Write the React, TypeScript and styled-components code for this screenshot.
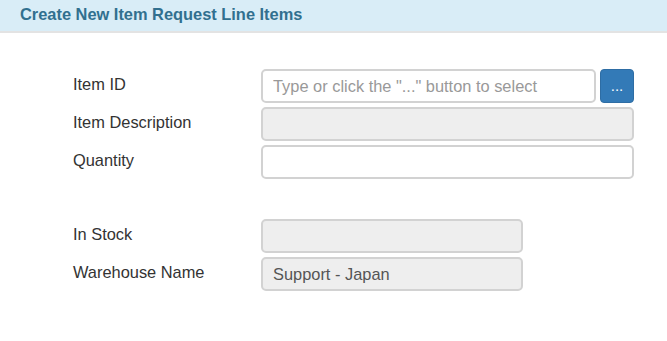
import * as React from "react";
import styled, { createGlobalStyle } from "styled-components";

const GlobalStyle = createGlobalStyle`
  html, body {
    margin: 0;
    padding: 0;
    background: #ffffff;
    font-family: "Liberation Sans", Arial, sans-serif;
  }
`;

const Page = styled.div`
  width: 667px;
  height: 341px;
  background: #ffffff;
`;

const Header = styled.div`
  height: 31px;
  background-color: #d9edf7;
  border-bottom: 2px solid #e3e3e3;
  display: flex;
  align-items: center;
  padding-left: 20px;
`;

const Title = styled.h3`
  margin: 0;
  font-size: 16.4px;
  font-weight: bold;
  color: #31708f;
  margin-top: -2px;
`;

const Form = styled.div`
  padding: 36px 33px 0 73px;
`;

const Group = styled.div<{ $spaceAfter?: number }>`
  display: flex;
  flex-direction: column;
  gap: 4px;
  margin-bottom: ${(p) => p.$spaceAfter ?? 0}px;
`;

const Row = styled.div`
  display: grid;
  grid-template-columns: 188px 1fr;
  align-items: center;
`;

const Label = styled.label`
  font-size: 16.4px;
  color: #333333;
  padding-bottom: 3px;
`;

const Field = styled.div<{ $width?: number }>`
  display: flex;
  gap: 4px;
  width: ${(p) => (p.$width ? `${p.$width}px` : "auto")};
`;

const Input = styled.input<{ $readOnly?: boolean }>`
  flex: 1;
  min-width: 0;
  height: 34px;
  box-sizing: border-box;
  border: 2px solid #d2d2d2;
  border-radius: 5px;
  padding: 0 10px;
  font-family: "Liberation Sans", Arial, sans-serif;
  font-size: 16.4px;
  color: #555555;
  background-color: ${(p) => (p.$readOnly ? "#eeeeee" : "#ffffff")};
  outline: none;
  &::placeholder {
    color: #999999;
  }
`;

const PickButton = styled.button`
  width: 34px;
  height: 34px;
  box-sizing: border-box;
  border: 1px solid #2e6da4;
  border-radius: 4px;
  background-color: #337ab7;
  color: #ffffff;
  font-family: "Liberation Sans", Arial, sans-serif;
  font-size: 15px;
  padding: 0 0 2px;
  cursor: pointer;
`;

export default function App() {
  return (
    <Page>
      <GlobalStyle />
      <Header>
        <Title>Create New Item Request Line Items</Title>
      </Header>
      <Form>
        <Group $spaceAfter={40}>
          <Row>
            <Label>Item ID</Label>
            <Field>
              <Input placeholder={'Type or click the "..." button to select'} />
              <PickButton>...</PickButton>
            </Field>
          </Row>
          <Row>
            <Label>Item Description</Label>
            <Field>
              <Input $readOnly readOnly />
            </Field>
          </Row>
          <Row>
            <Label>Quantity</Label>
            <Field>
              <Input />
            </Field>
          </Row>
        </Group>
        <Group>
          <Row>
            <Label>In Stock</Label>
            <Field $width={262}>
              <Input $readOnly readOnly />
            </Field>
          </Row>
          <Row>
            <Label>Warehouse Name</Label>
            <Field $width={262}>
              <Input $readOnly readOnly defaultValue="Support - Japan" />
            </Field>
          </Row>
        </Group>
      </Form>
    </Page>
  );
}
